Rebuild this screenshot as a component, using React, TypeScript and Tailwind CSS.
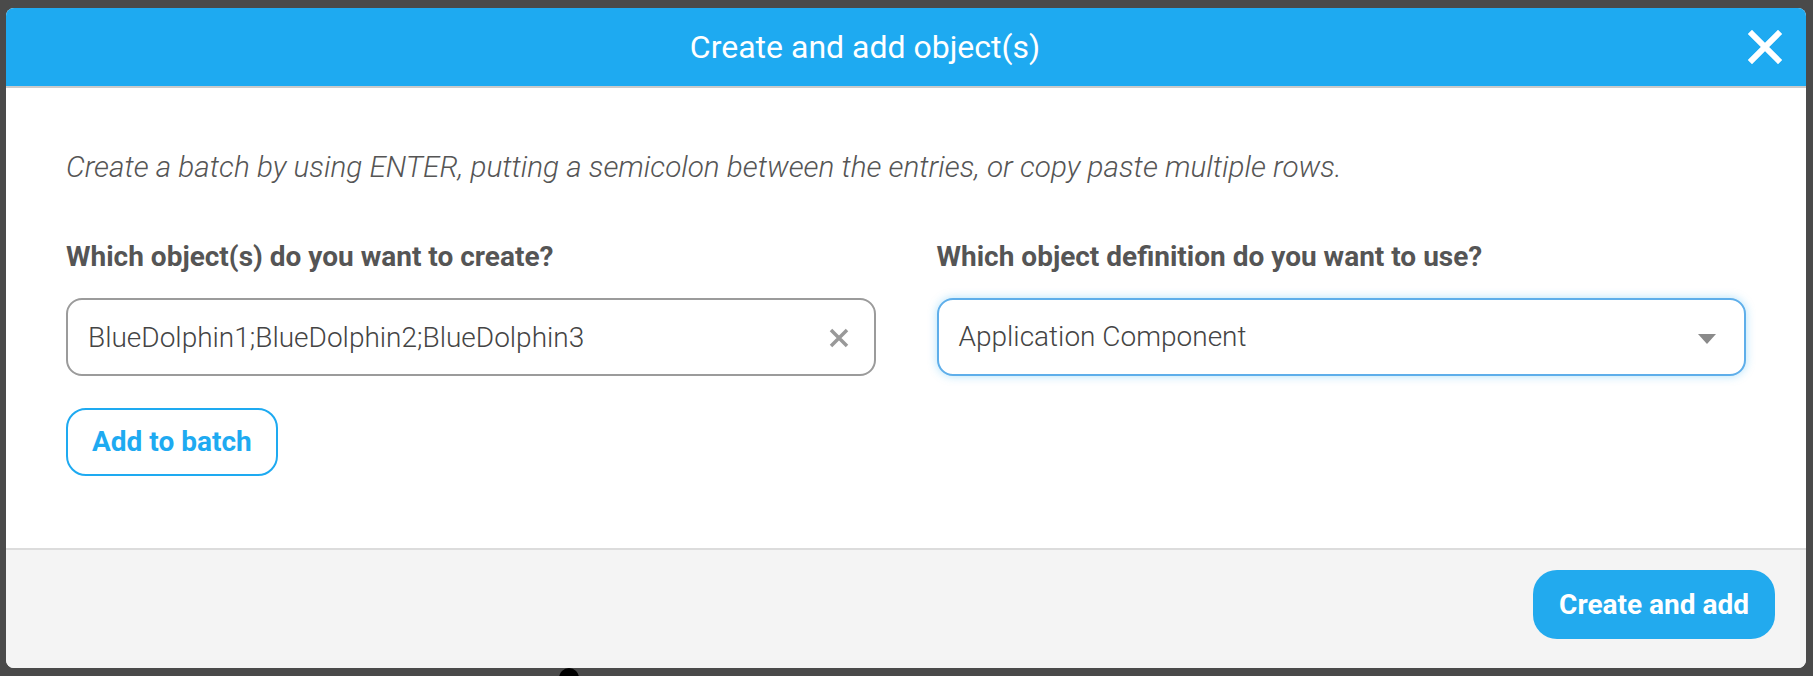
import React, { useState } from 'react';

const CreateObjectsDialog: React.FC = () => {
  const [names, setNames] = useState('BlueDolphin1;BlueDolphin2;BlueDolphin3');
  const [definition] = useState('Application Component');

  return (
    <div className="w-[1800px] h-[660px] rounded-[8px] bg-white flex flex-col overflow-hidden font-[Roboto,sans-serif]">
      {/* header */}
      <div className="h-[80px] shrink-0 bg-[#1eaaf1] border-b-2 border-[#cbcbcb] flex items-center">
        <h1 className="flex-1 text-center text-[32px] leading-none text-white">Create and add object(s)</h1>
        <button className="w-[82px] h-[34px] flex items-center justify-center">
          <svg viewBox="0 0 34 34" className="w-[34px] h-[34px]">
            <path d="M4 4 L30 30 M30 4 L4 30" stroke="#fff" strokeWidth="6" strokeLinecap="square" />
          </svg>
        </button>
      </div>

      {/* body */}
      <div className="flex-1 px-[60px] pt-[63px]">
        <p className="text-[29.7px] leading-[32px] italic font-light text-[#555]">
          Create a batch by using ENTER, putting a semicolon between the entries, or copy paste multiple rows.
        </p>

        <div className="grid grid-cols-2 gap-[61px] mt-[58px]">
          <div>
            <label className="block text-[28px] leading-[32px] font-bold text-[#555]">
              Which object(s) do you want to create?
            </label>
            <div className="relative mt-[25px]">
              <input
                type="text"
                value={names}
                onChange={(e) => setNames(e.target.value)}
                className="w-full h-[78px] rounded-[16px] border-2 border-[#9b9b9b] pl-[20px] pr-[60px] text-[28px] font-light text-[#444] outline-none bg-white"
              />
              <button className="absolute right-[26px] top-[29px] w-[22px] h-[22px]">
                <svg viewBox="0 0 22 22" className="w-[22px] h-[22px]">
                  <path d="M3 3 L19 19 M19 3 L3 19" stroke="#999" strokeWidth="3.5" />
                </svg>
              </button>
            </div>
            <button className="mt-[32px] h-[68px] px-[24px] rounded-[20px] border-2 border-[#1eaaf1] bg-white text-[28px] font-bold text-[#1eaaf1]">
              Add to batch
            </button>
          </div>

          <div>
            <label className="block text-[28px] leading-[32px] font-bold text-[#555]">
              Which object definition do you want to use?
            </label>
            <div className="relative mt-[25px] h-[78px] rounded-[16px] border-2 border-[#5eaeea] bg-white shadow-[0_0_10px_rgba(30,170,241,0.35)] flex items-center pl-[20px]">
              <span className="text-[28px] font-light text-[#444]">{definition}</span>
              <svg viewBox="0 0 18 10" className="absolute right-[28px] top-[34px] w-[18px] h-[10px]">
                <path d="M0 0 L18 0 L9 10 Z" fill="#8a8a8a" />
              </svg>
            </div>
          </div>
        </div>
      </div>

      {/* footer */}
      <div className="h-[120px] shrink-0 bg-[#f4f4f4] border-t-2 border-[#dcdcdc] flex justify-end items-start pt-[20px] pr-[31px]">
        <button className="h-[69px] px-[26px] rounded-[24px] bg-[#22aaee] text-[28px] font-bold text-white">
          Create and add
        </button>
      </div>
    </div>
  );
};

export default function App() {
  return (
    <div className="relative w-[1813px] h-[676px] bg-[#4a4a4a] pt-[8px] pl-[6px] overflow-hidden">
      <CreateObjectsDialog />
      <div className="absolute left-[559px] top-[668px] w-[20px] h-[12px] bg-black rounded-t-[10px]" />
    </div>
  );
}
